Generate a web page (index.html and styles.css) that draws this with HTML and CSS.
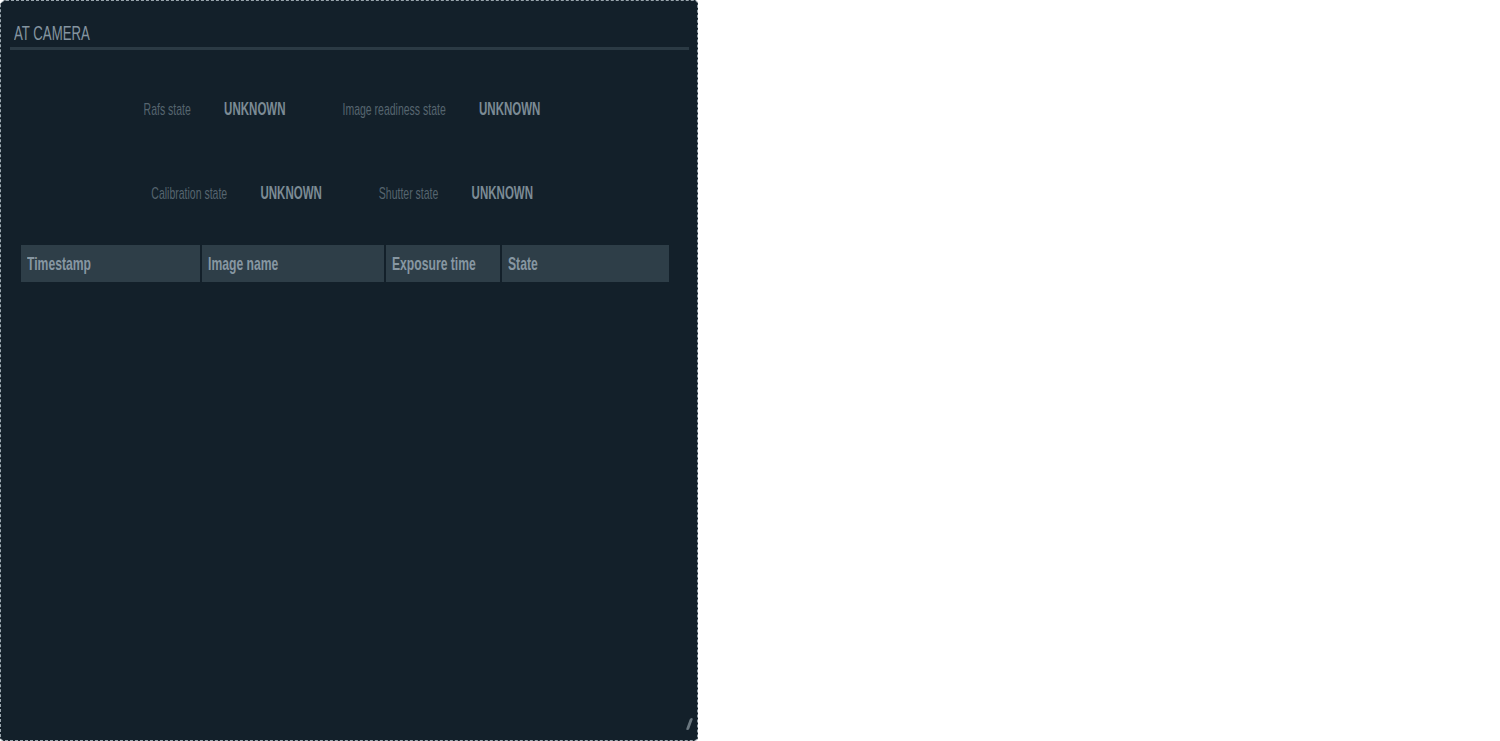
FILE: index.html
```html
<!DOCTYPE html>
<html>
<head>
<meta charset="utf-8">
<link rel="stylesheet" href="styles.css">
</head>
<body>
<div class="panel">
  <div class="title"><span class="narrow">AT CAMERA</span></div>
  <div class="states">
    <div class="row">
      <div class="pair"><span class="label">Rafs state</span><span class="value">UNKNOWN</span></div>
      <div class="pair"><span class="label">Image readiness state</span><span class="value">UNKNOWN</span></div>
    </div>
    <div class="row">
      <div class="pair"><span class="label">Calibration state</span><span class="value">UNKNOWN</span></div>
      <div class="pair"><span class="label">Shutter state</span><span class="value">UNKNOWN</span></div>
    </div>
  </div>
  <table class="log">
    <thead>
      <tr>
        <th class="c1"><span class="narrow">Timestamp</span></th>
        <th class="c2"><span class="narrow">Image name</span></th>
        <th class="c3"><span class="narrow">Exposure time</span></th>
        <th class="c4"><span class="narrow">State</span></th>
      </tr>
    </thead>
  </table>
  <div class="grip"></div>
</div>
</body>
</html>
```
FILE: styles.css
```css
html, body { margin: 0; padding: 0; background: #fff; }
body { font-family: "Liberation Sans", Arial, sans-serif; }
.narrow { display: inline-block; transform: scaleX(0.64); transform-origin: left center; white-space: nowrap; }
.panel {
  position: relative;
  box-sizing: border-box;
  width: 698px;
  height: 741px;
  background: #13202a;
  border: 1px dashed #9aa6ae;
  border-radius: 6px 4px 4px 4px;
  padding: 18px 8px 0 9px;
}
.title {
  color: #8595a0;
  font-size: 20px;
  line-height: 28px;
  padding-left: 4px;
  border-bottom: 3px solid #2b3a44;
}
.title .narrow { transform: scaleX(0.66); }
.states { display: flex; flex-direction: column; align-items: center; padding-top: 48px; gap: 62px; padding-right: 15px; }
.row { display: flex; gap: 89px; transform: scaleX(0.64); transform-origin: center; white-space: nowrap; }
.pair { display: flex; align-items: baseline; gap: 52px; line-height: 22px; }
.label { color: #56656f; font-size: 16.4px; }
.value { color: #7c8b95; font-weight: bold; font-size: 18px; }
.log {
  margin: 41px 0 0 9px;
  width: 652px;
  table-layout: fixed;
  border-collapse: separate;
  border-spacing: 2px 0;
}
.log th {
  background: #2e3e48;
  color: #8797a2;
  text-align: left;
  font-weight: bold;
  font-size: 19px;
  height: 37px;
  padding: 0 6px;
  box-sizing: border-box;
  overflow: visible;
}
.c1 { width: 179px; }
.c2 { width: 182px; }
.c3 { width: 114px; }
.c4 { width: 167px; }
.grip {
  position: absolute;
  right: 6px;
  bottom: 10px;
  width: 3px;
  height: 12px;
  background: #6b7880;
  transform: skewX(-20deg);
  border-radius: 2px;
}
```
